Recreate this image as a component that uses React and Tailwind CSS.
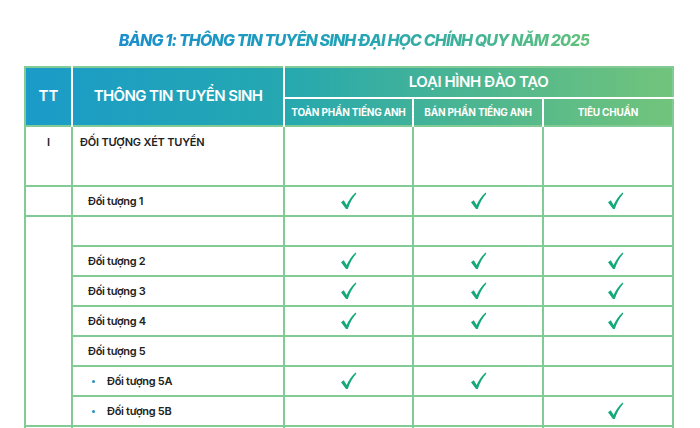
import React from 'react';

const Check = () => (
  <svg width="17" height="18" viewBox="0 0 17 18" className="mx-auto block">
    <path d="M1 10.2 L3.8 8.2 L6.6 13 C9 8 12 3.8 15.6 0.6 L16.4 1.6 C12.8 5.6 10 10.4 7.8 17 L6 17 Z" fill="#14a87a" />
  </svg>
);

const rows = [
  { label: 'Đối tượng 2', checks: [1, 1, 1] },
  { label: 'Đối tượng 3', checks: [1, 1, 1] },
  { label: 'Đối tượng 4', checks: [1, 1, 1] },
  { label: 'Đối tượng 5', checks: [0, 0, 0] },
  { label: 'Đối tượng 5A', checks: [1, 1, 0], bullet: true },
  { label: 'Đối tượng 5B', checks: [0, 0, 1], bullet: true },
];

const cell = 'border-2 border-[#82cb95] bg-white';

function CheckCell({ on, last }) {
  return (
    <td className={`${cell} ${last ? 'pl-[14px]' : ''}`}>{on ? <Check /> : null}</td>
  );
}

export default function App() {
  return (
    <div className="w-[700px] h-[428px] overflow-hidden bg-white" style={{ fontFamily: 'Inter, "Noto Sans", sans-serif' }}>
      <h1 className="pt-[30px] pl-[8px] text-center text-[16px] font-extrabold italic tracking-[-0.85px] leading-[20px]">
        <span className="bg-[linear-gradient(90deg,#1a8fcc_0%,#22a3b6_50%,#62c27a_100%)] bg-clip-text text-transparent">
          BẢNG 1: THÔNG TIN TUYỂN SINH ĐẠI HỌC CHÍNH QUY NĂM 2025
        </span>
      </h1>

      <table className="ml-[24px] mt-[16px] w-[648px] table-fixed border-collapse border-2 border-[#82cb95] bg-[linear-gradient(90deg,#1a9bc9_0%,#25a8b0_40%,#4db690_70%,#72c47b_100%)] bg-no-repeat bg-[length:100%_60px] text-[#222]">
        <colgroup>
          <col className="w-[47px]" />
          <col className="w-[212px]" />
          <col className="w-[129px]" />
          <col className="w-[130px]" />
          <col className="w-[130px]" />
        </colgroup>
        <thead className="text-white">
          <tr className="h-[31px]">
            <th rowSpan={2} className="border-r-2 border-white text-[15px] font-semibold">TT</th>
            <th rowSpan={2} className="border-r-2 border-white text-[15px] font-semibold tracking-[-0.6px]">THÔNG TIN TUYỂN SINH</th>
            <th colSpan={3} className="border-b-2 border-white text-[15px] font-semibold tracking-[-0.4px]">LOẠI HÌNH ĐÀO TẠO</th>
          </tr>
          <tr className="h-[28px] text-[10px] font-semibold tracking-[-0.2px]">
            <th className="border-r-2 border-white">TOÀN PHẦN TIẾNG ANH</th>
            <th className="border-r-2 border-white">BÁN PHẦN TIẾNG ANH</th>
            <th>TIÊU CHUẨN</th>
          </tr>
        </thead>
        <tbody className="text-[11px] font-semibold">
          <tr className="h-[60px]">
            <td className={`${cell} align-top pt-[7px] text-center`}>I</td>
            <td className={`${cell} align-top pt-[7px] pl-[7px] tracking-[-0.2px]`}>ĐỐI TƯỢNG XÉT TUYỂN</td>
            <td className={cell}></td>
            <td className={cell}></td>
            <td className={cell}></td>
          </tr>
          <tr className="h-[30px]">
            <td className={cell}></td>
            <td className={`${cell} pl-[15px] tracking-[-0.3px]`}>Đối tượng 1</td>
            <CheckCell on />
            <CheckCell on />
            <CheckCell on last />
          </tr>
          <tr className="h-[30px]">
            <td rowSpan={7} className={cell}></td>
            <td className={cell}></td>
            <td className={cell}></td>
            <td className={cell}></td>
            <td className={cell}></td>
          </tr>
          {rows.map((r) => (
            <tr key={r.label} className="h-[30px]">
              <td className={`${cell} tracking-[-0.3px] ${r.bullet ? 'pl-[19px]' : 'pl-[15px]'}`}>
                {r.bullet ? (
                  <span className="flex items-center">
                    <span className="mr-[12px] inline-block h-[3px] w-[3px] rounded-full bg-[#2b8fc4]" />
                    {r.label}
                  </span>
                ) : (
                  r.label
                )}
              </td>
              {r.checks.map((c, i) => (
                <CheckCell key={i} on={c} last={i === 2} />
              ))}
            </tr>
          ))}
          <tr className="h-[30px]">
            <td className={cell}></td>
            <td className={cell}></td>
            <td className={cell}></td>
            <td className={cell}></td>
            <td className={cell}></td>
          </tr>
        </tbody>
      </table>
    </div>
  );
}
